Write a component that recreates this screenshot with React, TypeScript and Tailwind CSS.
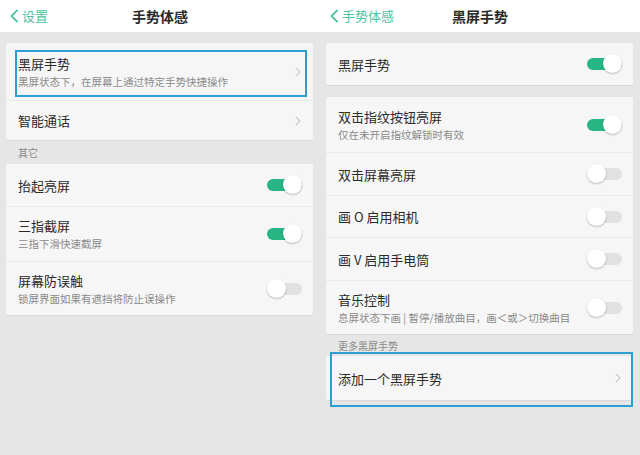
import React from 'react';

const FONT = { fontFamily: '"Noto Sans CJK SC", "Noto Sans", sans-serif' };

function Toggle({ on }: { on: boolean }) {
  return (
    <div className="relative w-[36px] h-[20px] flex items-center shrink-0">
      <div className={`w-[35px] h-[12px] rounded-full ${on ? 'bg-[#27b583]' : 'bg-[#e1e1e1]'}`} />
      <div
        className={`absolute top-[0px] w-[19px] h-[19px] rounded-full bg-white shadow-[0_1px_2px_rgba(0,0,0,0.25)] ${on ? 'right-[1px]' : 'left-[0px]'}`}
      />
    </div>
  );
}

function Chevron() {
  return (
    <svg width="6" height="10" viewBox="0 0 6 10" className="shrink-0 mr-[2px]">
      <polyline points="1,1 5,5 1,9" fill="none" stroke="#c9c9c9" strokeWidth="1.1" />
    </svg>
  );
}

type RowProps = {
  title: string;
  sub?: string;
  toggle?: boolean;
  chevron?: boolean;
  h: string;
  first?: boolean;
  children?: React.ReactNode;
};

function Row({ title, sub, toggle, chevron, h, first, children }: RowProps) {
  return (
    <div className={`relative flex items-center pl-[12px] pr-[10px] ${h} ${first ? '' : 'border-t border-[#e9e9e9]'}`}>
      <div className="flex-1 flex flex-col min-w-0">
        <div className="text-[13px] leading-[17px] text-[#2a2a2a]">{title}</div>
        {sub && <div className="text-[10.5px] leading-[15px] mt-[2px] text-[#8a8a8a] whitespace-nowrap">{sub}</div>}
      </div>
      {toggle !== undefined && <Toggle on={toggle} />}
      {chevron && <Chevron />}
      {children}
    </div>
  );
}

function Card({ children, className = '' }: { children: React.ReactNode; className?: string }) {
  return (
    <div className={`relative mx-[6px] mr-[7px] bg-[#f6f6f6] rounded-[2px] shadow-[0_1px_1px_rgba(0,0,0,0.06)] ${className}`}>
      {children}
    </div>
  );
}

function Header({ back, title }: { back: string; title: string }) {
  return (
    <div className="h-[32px] bg-white grid grid-cols-[1fr_auto_1fr] items-center">
      <div className="flex items-center pl-[10px] gap-[3px] text-[#4cc3a0] text-[13px]">
        <svg width="9" height="14" viewBox="0 0 9 14">
          <polyline points="7.5,1 1.5,7 7.5,13" fill="none" stroke="#4cc3a0" strokeWidth="1.8" />
        </svg>
        <span>{back}</span>
      </div>
      <div className="text-[14px] font-bold text-[#2a2a2a]">{title}</div>
      <div />
    </div>
  );
}

function Highlight({ className }: { className: string }) {
  return <div className={`absolute border-2 border-[#2b9fd3] pointer-events-none ${className}`} />;
}

export default function App() {
  return (
    <div style={FONT} className="w-[640px] h-[455px] bg-[#e6e6e6] flex overflow-hidden">
      <div className="w-[320px] flex flex-col">
        <Header back="设置" title="手势体感" />
        <Card className="mt-[11px]">
          <Row title="黑屏手势" sub="黑屏状态下，在屏幕上通过特定手势快捷操作" chevron h="h-[57px]" first>
            <Highlight className="left-[9px] right-[6px] top-[7px] bottom-[3px]" />
          </Row>
          <Row title="智能通话" chevron h="h-[40px]" />
        </Card>
        <div className="h-[24px] flex items-center pl-[18px] text-[10px] text-[#8a8a8a]">其它</div>
        <Card>
          <Row title="抬起亮屏" toggle h="h-[42px]" first />
          <Row title="三指截屏" sub="三指下滑快速截屏" toggle h="h-[55px]" />
          <Row title="屏幕防误触" sub="锁屏界面如果有遮挡将防止误操作" toggle={false} h="h-[54px]" />
        </Card>
      </div>
      <div className="w-[320px] flex flex-col">
        <Header back="手势体感" title="黑屏手势" />
        <Card className="mt-[11px]">
          <Row title="黑屏手势" toggle h="h-[42px]" first />
        </Card>
        <Card className="mt-[12px]">
          <Row title="双击指纹按钮亮屏" sub="仅在未开启指纹解锁时有效" toggle h="h-[55px]" first />
          <Row title="双击屏幕亮屏" toggle={false} h="h-[43px]" />
          <Row title="画 O 启用相机" toggle={false} h="h-[42px]" />
          <Row title="画 V 启用手电筒" toggle={false} h="h-[43px]" />
          <Row title="音乐控制" sub="息屏状态下画 | 暂停/播放曲目，画＜或＞切换曲目" toggle={false} h="h-[54px]" />
        </Card>
        <div className="h-[22px] flex items-center pl-[18px] text-[10px] text-[#8a8a8a]">更多黑屏手势</div>
        <Card>
          <Row title="添加一个黑屏手势" chevron h="h-[44px]" first />
          <Highlight className="left-[4px] right-[0px] top-[-4px] bottom-[-7px]" />
        </Card>
      </div>
    </div>
  );
}
